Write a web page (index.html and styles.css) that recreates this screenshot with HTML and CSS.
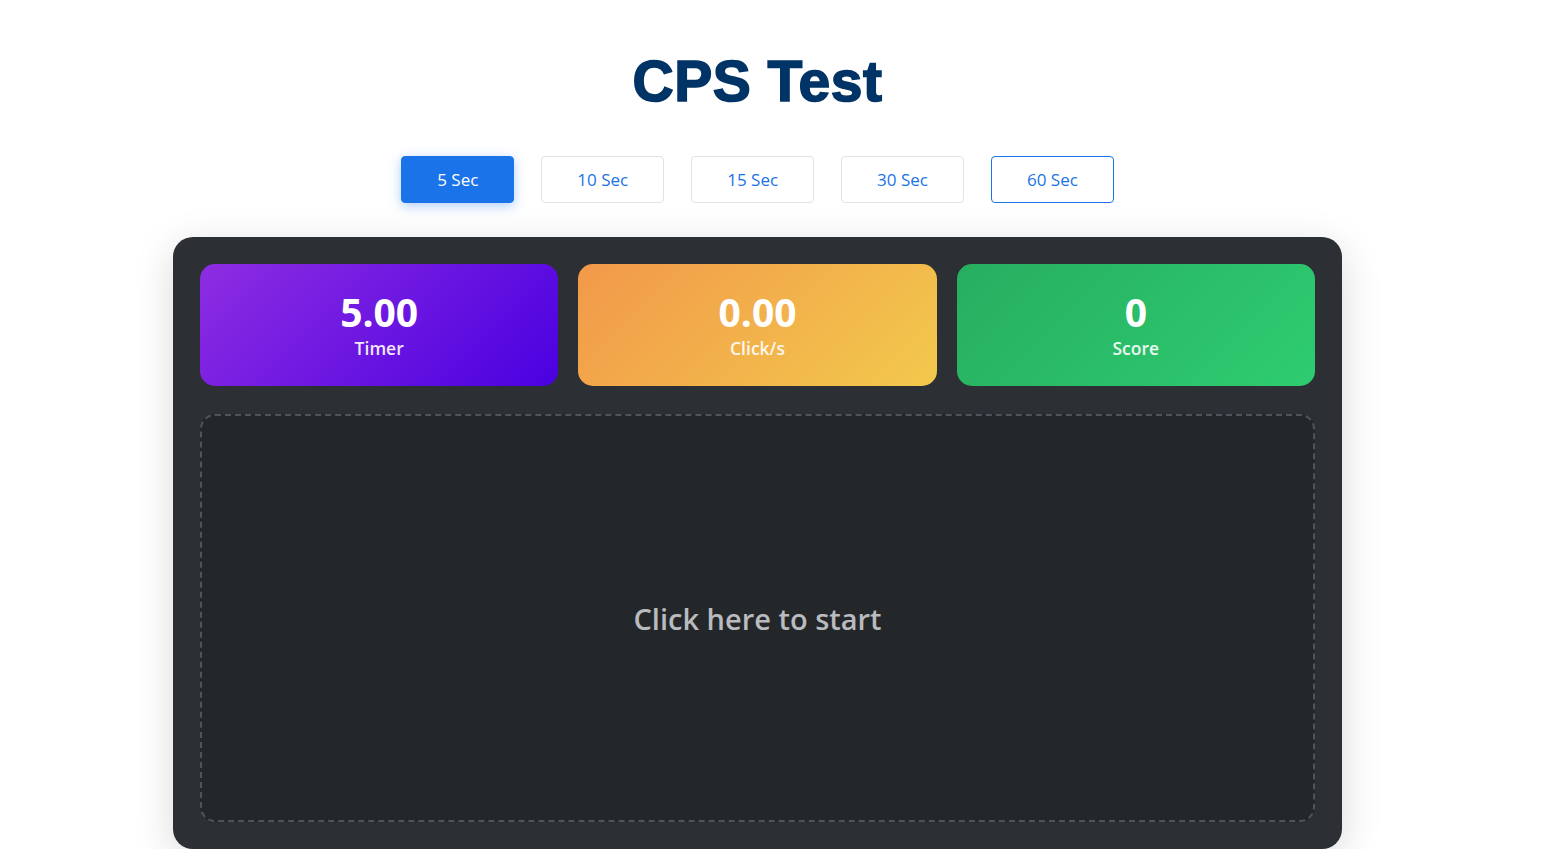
FILE: index.html
```html
<!DOCTYPE html>
<html lang="en">
<head>
<meta charset="utf-8">
<title>CPS Test</title>
<link rel="stylesheet" href="styles.css">
</head>
<body>
<main class="page">
  <h1 class="title">CPS Test</h1>
  <div class="modes">
    <button class="mode active">5 Sec</button>
    <button class="mode">10 Sec</button>
    <button class="mode">15 Sec</button>
    <button class="mode">30 Sec</button>
    <button class="mode focus">60 Sec</button>
  </div>
  <section class="panel">
    <div class="stats">
      <div class="stat timer"><div class="value">5.00</div><div class="label">Timer</div></div>
      <div class="stat cps"><div class="value">0.00</div><div class="label">Click/s</div></div>
      <div class="stat score"><div class="value">0</div><div class="label">Score</div></div>
    </div>
    <div class="area">Click here to start</div>
  </section>
</main>
</body>
</html>
```
FILE: styles.css
```css
html, body { margin: 0; padding: 0; background: #ffffff; }
body { font-family: "Open Sans", "Noto Sans", sans-serif; }
.page {
  width: 1515px;
  display: flex;
  flex-direction: column;
  align-items: center;
  padding-top: 46px;
}
.title {
  margin: 0;
  font-family: "Liberation Sans", Arial, sans-serif;
  font-weight: 900;
  font-size: 57px;
  line-height: 70px;
  color: #003366;
  -webkit-text-stroke: 1.6px #003366;
  letter-spacing: 0.5px;
}
.modes {
  display: flex;
  gap: 27px;
  margin-top: 40px;
}
.mode {
  font-family: "Open Sans", "Noto Sans", sans-serif;
  font-size: 17px;
  font-weight: 500;
  height: 47px;
  padding: 0 35px;
  background: #fff;
  color: #1a73e8;
  border: 1px solid #dfe3e8;
  border-radius: 4px;
}
.mode.active {
  background: #1a73e8;
  color: #fff;
  border-color: #1a73e8;
  box-shadow: 0 3px 12px rgba(26, 115, 232, 0.35);
}
.mode.focus { border-color: #1a73e8; }
.panel {
  margin-top: 34px;
  width: 1169px;
  box-sizing: border-box;
  padding: 27px;
  background: #2c2f33;
  border-radius: 20px;
  box-shadow: 0 10px 40px rgba(0, 0, 0, 0.15);
  display: flex;
  flex-direction: column;
  gap: 28px;
}
.stats {
  display: grid;
  grid-template-columns: 1fr 1fr 1fr;
  gap: 20px;
}
.stat {
  height: 122px;
  border-radius: 15px;
  color: #fff;
  display: flex;
  flex-direction: column;
  align-items: center;
  justify-content: center;
}
.timer { background: linear-gradient(135deg, #8e2de2, #4a00e0); }
.cps { background: linear-gradient(135deg, #f2994a, #f2c94c); }
.score { background: linear-gradient(135deg, #27ae60, #2ecc71); }
.value {
  font-size: 39px;
  font-weight: 700;
  line-height: 46px;
  margin-top: -2px;
}
.label {
  font-size: 17.5px;
  font-weight: 600;
  line-height: 24px;
  margin-top: 1px;
  opacity: 0.9;
}
.area {
  height: 408px;
  box-sizing: border-box;
  border: 2px dashed #50545a;
  border-radius: 15px;
  background: #23272a;
  color: #b9bbbe;
  font-size: 29px;
  font-weight: 600;
  display: flex;
  align-items: center;
  justify-content: center;
}
```
